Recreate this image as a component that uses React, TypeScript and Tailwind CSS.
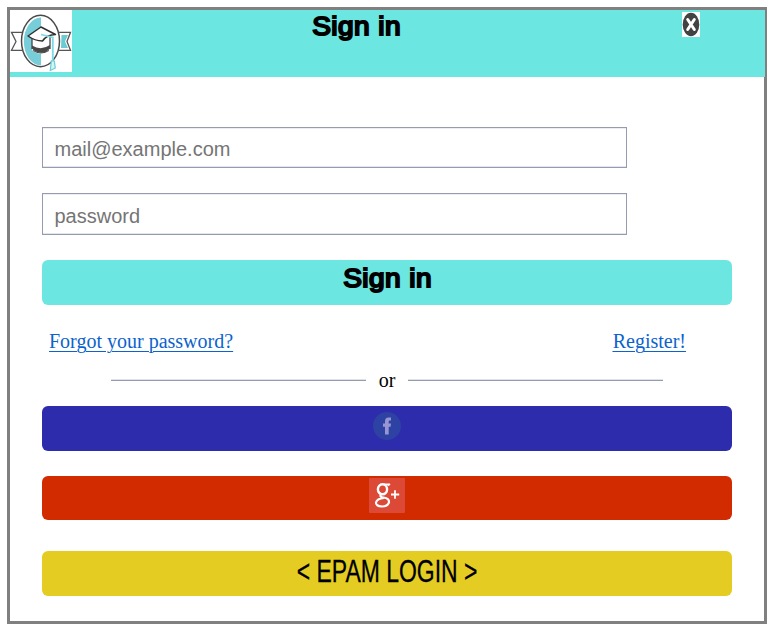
import React from 'react';

function Crest() {
  return (
    <svg width="62" height="62" viewBox="0 0 62 62" className="block shrink-0 bg-white" fill="none">
      <path d="M12 22.300H1.500L6 31.500L1.500 40.300H12" stroke="#555" strokeWidth="1.300" />
      <path d="M49 22.300H60.500L57 31.500L60.500 40.300H49" fill="#fff" stroke="#555" strokeWidth="1.300" />
      <path d="M51.500 25H58L55 31.500L58 38H51Z" fill="#6bcbd3" />
      <ellipse cx="30.500" cy="31" rx="19" ry="25.700" fill="#fff" stroke="#4a4a4a" strokeWidth="1.500" />
      <path d="M31 7.500A17 23.800 0 0 0 31 55.500Z" fill="#78ced8" />
      <path d="M22 29V40Q31 48 40 39V28Z" fill="#fff" />
      <path d="M22 35.500Q31 41 40 35V38.500Q36 43 31 42.700Q25 42.500 22 38.500Z" fill="#484848" />
      <path d="M23 40.500Q31 45.500 39 40.500" stroke="#484848" strokeWidth="1" />
      <path d="M22 29V39M40 27V39" stroke="#484848" strokeWidth="1.300" />
      <path d="M18 26L31 17L45.500 24.500Q37 24.500 32.500 31Q25 31 18 26Z" fill="#fff" stroke="#303030" strokeWidth="1.500" strokeLinejoin="round" />
      <path d="M31 24.500L42.800 27.500V52" stroke="#7bdae4" strokeWidth="1.800" />
      <path d="M41.300 51H44.300L45.300 58L40.300 60.500Z" fill="#d5f2f4" stroke="#6bced9" strokeWidth="1.200" />
    </svg>
  );
}

function CloseIcon() {
  return (
    <svg width="18" height="25" viewBox="0 0 18 25" className="block bg-white">
      <ellipse cx="9" cy="12.500" rx="8.300" ry="11.800" fill="#424242" />
      <path d="M5.700 7.500L12.300 17.500M12.300 7.500L5.700 17.500" stroke="#fff" strokeWidth="3" strokeLinecap="round" />
    </svg>
  );
}

function Field({ type, hint, size }: { type: string; hint: string; size: string }) {
  return (
    <input
      type={type}
      placeholder={hint}
      className={`block w-[585px] border border-[#959cb0] bg-white pl-[11.5px] text-[20px] shadow-[inset_0_-1px_0_#e2e5ec,inset_0_1px_0_#eceef3] outline-none placeholder:text-[#757575] ${size}`}
    />
  );
}

function Title() {
  return (
    <span className="-mr-[0.7px] inline-block origin-center scale-x-[1.12] whitespace-nowrap text-[25px] font-normal leading-[30px] tracking-[0.4px] text-black [-webkit-text-stroke:1.9px_black]">
      Sign in
    </span>
  );
}

export default function App() {
  return (
    <div className="h-[630px] w-[777px] bg-white p-[7px] font-['Liberation_Sans',Arial,sans-serif]">
      <main className="h-[617px] w-[760px] border-[3px] border-[#808080]">
        <header className="flex h-[67px] w-[755px] items-start bg-[#6ce6e1]">
          <Crest />
          <h1 className="ml-[239px] mt-[1px] flex w-[90px] justify-center"><Title /></h1>
          <button aria-label="Close" className="ml-[281px] mt-[2px]"><CloseIcon /></button>
        </header>
        <div className="flex w-[722px] flex-col pl-[32px] pt-[50px]">
          <Field type="email" hint="mail@example.com" size="h-[41px] pt-[3px]" />
          <Field type="password" hint="password" size="mt-[25px] h-[42px] pt-[4px]" />
          <button className="mt-[25px] flex h-[45px] justify-center rounded-[6px] bg-[#6ce6e1] pt-[3px]"><Title /></button>
          <nav className="mt-[25px] flex h-[24px] justify-between pl-[7px] pr-[46px] font-['Liberation_Serif','Times_New_Roman',serif] text-[20px] leading-[23px] text-[#0b63ce] underline decoration-1 underline-offset-[3px]">
            <a href="#">Forgot your password?</a>
            <a href="#">Register!</a>
          </nav>
          <div className="mt-[14px] flex h-[24px] items-center pl-[69px] font-['Liberation_Serif','Times_New_Roman',serif] text-[20px] leading-[24px] text-black">
            <span className="h-[2px] w-[255px] border-b border-t border-b-[#959cb0] border-t-[#dfe2e9]" />
            <span className="w-[42px] text-center">or</span>
            <span className="h-[2px] w-[255px] border-b border-t border-b-[#959cb0] border-t-[#dfe2e9]" />
          </div>
          <button aria-label="Facebook" className="mt-[14px] flex h-[45px] justify-center rounded-[6px] bg-[#2d2cac] pt-[6px]">
            <svg width="28" height="28" viewBox="0 0 28 28">
              <circle cx="14" cy="14" r="14" fill="#2d42a2" />
              <path d="M12 22.500V14.800H10V11.500H12V9.500Q12 5.500 15.500 5.500H18V8.500H16.700Q15.700 8.500 15.700 9.800V11.500H18L17.600 14.800H15.700V22.500Z" fill="#9796d2" />
            </svg>
          </button>
          <button aria-label="Google Plus" className="mt-[25px] flex h-[44px] justify-center rounded-[6px] bg-[#d22b00] pt-[2px]">
            <svg width="36" height="35" viewBox="0 0 36 35">
              <rect width="36" height="35" rx="1" fill="#dc4936" />
              <g fill="none" stroke="#fff">
                <ellipse cx="13.500" cy="11.300" rx="4.600" ry="5" strokeWidth="2.400" />
                <path d="M13.500 6.200H21L18.500 7.500" strokeWidth="1.600" />
                <path d="M12 16.300Q10 19 14.500 19.500Q20.500 20.500 20 24.300Q18.500 28.500 13 28.500Q6.500 28 7 24.500Q8 20.500 15 20" strokeWidth="2.200" />
                <path d="M22 16.500H30.200M26 12.300V20.700" strokeWidth="1.800" />
              </g>
            </svg>
          </button>
          <button className="mt-[31px] flex h-[45px] justify-center rounded-[6px] bg-[#e4cc22] pt-[4px] text-[31px] leading-[34px] text-black [-webkit-text-stroke:0.3px_black]">
            <span className="origin-center scale-x-[0.74] whitespace-nowrap">&lt; EPAM LOGIN &gt;</span>
          </button>
        </div>
      </main>
    </div>
  );
}
